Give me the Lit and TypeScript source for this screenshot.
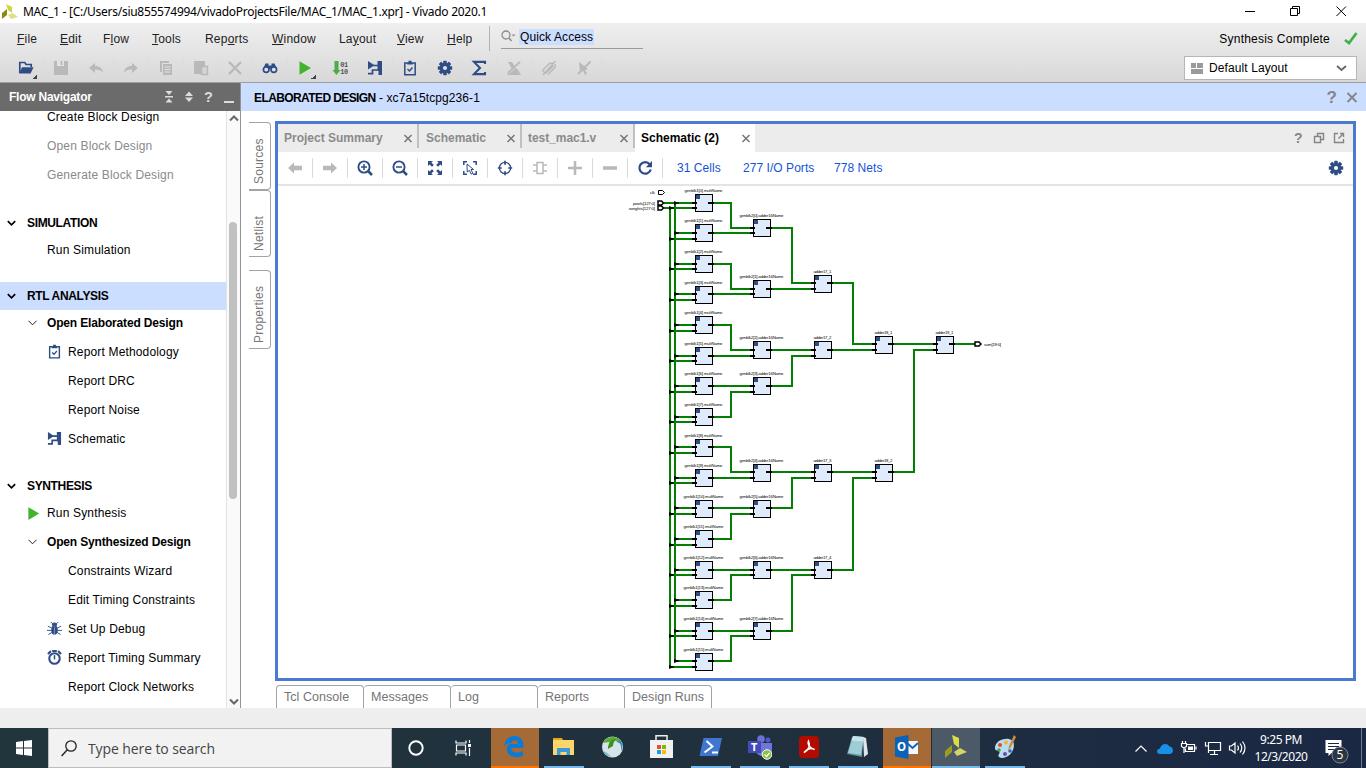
import { LitElement, html, svg, css, nothing } from "lit";
import { customElement } from "lit/decorators.js";
import { classMap } from "lit/directives/class-map.js";

const NAVY = "#2f4d85";
const GREY = "#b9b9b9";

const gear = (fill: string, hole: string) => svg`
  <g transform="translate(8 8)" fill=${fill}>
    ${[0, 45, 90, 135].map((a) => svg`<rect x="-1.8" y="-7.2" width="3.6" height="14.4" rx=".6" transform="rotate(${a})"/>`)}
    <circle r="5.2"/><circle r="2.1" fill=${hole}/>
  </g>`;

const ICONS: Record<string, unknown> = {
  open: svg`<path d="M1.8 13V2.5h5l1.2 2h5.2V7" fill="none" stroke=${NAVY} stroke-width="1.7"/><path d="M1.2 13.6 4 7.2h11.6l-3 6.4z" fill=${NAVY}/>`,
  save: svg`<path d="M1 1h14v14H1z" fill=${GREY}/><path d="M4 1h7v5H4z" fill="#e3e3e3"/><path d="M7.500 1h2v4h-2z" fill=${GREY}/>`,
  undo: svg`<path d="M1 8l6-5v3c4.500 0 7.500 2 8 7-2-3-4.500-3.500-8-3.400V13z" fill=${GREY}/>`,
  redo: svg`<path d="M15 8L9 3v3c-4.500 0-7.500 2-8 7 2-3 4.500-3.500 8-3.400V13z" fill=${GREY}/>`,
  copy: svg`<path d="M2 1h9v2H4v9H2z" fill=${GREY}/><path d="M5 4h9v11H5z" fill=${GREY}/><path d="M6.500 7h6M6.500 9.500h6M6.500 12h6" stroke="#e1e1e1"/>`,
  paste: svg`<path d="M1 1h11v5H8v8H1z" fill=${GREY}/><path d="M8.500 6.500h6v8h-6z" fill="#d4d4d4" stroke=${GREY} stroke-width="1.400"/>`,
  cut: svg`<path d="M2 2l12 12M14 2L2 14" stroke=${GREY} stroke-width="2.400"/>`,
  find: svg`<path d="M3.500 3.500h3v2h3v-2h3L15 9H1z" fill=${NAVY}/><circle cx="4.200" cy="9.600" r="2.800" fill="#dfe3ec" stroke=${NAVY} stroke-width="1.700"/><circle cx="11.800" cy="9.600" r="2.800" fill="#dfe3ec" stroke=${NAVY} stroke-width="1.700"/>`,
  play: svg`<path d="M2.500 1.200L14 8 2.500 14.800z" fill="#3fb42c"/>`,
  bits: svg`<path d="M2.500 1h4v9H8.500l-4 5-4-5h2z" fill="#48ae49"/><text x="8.200" y="7" class="bit">01</text><text x="8.200" y="14" class="bit">10</text>`,
  schem: svg`<path d="M1 1l6.500 4.200L1 9.500z" fill=${NAVY}/><path d="M10.500 1H15v14h-3.500v-4h-1z" fill=${NAVY}/><path d="M6 5.500h5M1 13.700h4.500V10H11" fill="none" stroke=${NAVY} stroke-width="1.700"/>`,
  clip: svg`<path d="M2.800 3h10.400v11.800H2.800z" fill="none" stroke=${NAVY} stroke-width="1.500"/><path d="M5.200 4.500V2.700h1.300V.8h3v1.900h1.300v1.800z" fill=${NAVY}/><path d="M5.500 9l2 2 3-3.500" fill="none" stroke=${NAVY} stroke-width="1.400"/>`,
  gear: gear(NAVY, "#e0e0e0"),
  gearw: gear(NAVY, "#fff"),
  sum: svg`<path d="M14 4V1.900H3L9 8l-6 6.100h11V12" fill="none" stroke=${NAVY} stroke-width="2.100"/>`,
  off1: svg`<path d="M2 2h4l3 5 3 3 3 5H1l5-6z" fill=${GREY}/><path d="M14 2L2 13" stroke=${GREY} stroke-width="2"/><path d="M13.500 4L4 13" stroke="#dedede" stroke-width=".8"/>`,
  off2: svg`<path d="M1.500 10.500l7-7 3.500-.5M4.500 13.500l8-7.500M1.500 10.500l3 3M7 14.500l7-7V4M14.500 1L2 15M6 11.500l6-6" fill="none" stroke=${GREY} stroke-width="1.400"/>`,
  off3: svg`<path d="M3 2l9 7-3 1 2 4-2 .8-2-4-3 2z" fill=${GREY}/><path d="M14.500 1.500L2 14" stroke=${GREY} stroke-width="2"/>`,
  left: svg`<path d="M1 8l6-5.500v3.200h8v4.600H7v3.200z" fill=${GREY}/>`,
  right: svg`<path d="M15 8L9 2.500v3.200H1v4.600h8v3.200z" fill=${GREY}/>`,
  zin: svg`<circle cx="7" cy="7" r="5.600" fill="none" stroke=${NAVY} stroke-width="1.900"/><path d="M11 11l4 4" stroke=${NAVY} stroke-width="2.500"/><path d="M4 7h6M7 4v6" stroke=${NAVY} stroke-width="1.500"/>`,
  zout: svg`<circle cx="7" cy="7" r="5.600" fill="none" stroke=${NAVY} stroke-width="1.900"/><path d="M11 11l4 4" stroke=${NAVY} stroke-width="2.500"/><path d="M4 7h6" stroke=${NAVY} stroke-width="1.500"/>`,
  fit: svg`<g fill=${NAVY}><path d="M1 1h5L4.400 2.600 6.800 5 5 6.800 2.600 4.400 1 6z"/><path d="M15 1v5l-1.600-1.600L11 6.800 9.200 5l2.400-2.400L10 1z"/><path d="M15 15h-5l1.600-1.600L9.200 11 11 9.200l2.400 2.400L15 10z"/><path d="M1 15v-5l1.600 1.600L5 9.200 6.800 11l-2.400 2.400L6 15z"/></g>`,
  sel: svg`<path d="M1.800 5V1.800H5M11 1.800h3.200V5M14.200 11v3.200H11M5 14.200H1.800V11" fill="none" stroke=${NAVY} stroke-width="1.500"/><path d="M5 4l6.500 5.500H9l1.800 3.800-1.700.8-1.700-3.800L5.200 12z" fill="#fff" stroke=${NAVY}/>`,
  target: svg`<circle cx="8" cy="8" r="5.600" fill="none" stroke=${NAVY} stroke-width="1.300"/><path d="M8 .8v4M8 11.200v4M.8 8h4M11.200 8h4" stroke=${NAVY} stroke-width="1.700"/>`,
  chip: svg`<path d="M5 2.500h6v11H5zM1 5h4M1 11h4M11 5h4M11 11h4" fill="none" stroke=${GREY} stroke-width="1.500"/>`,
  plus: svg`<path d="M8 1v14M1 8h14" stroke=${GREY} stroke-width="2.600"/>`,
  minus: svg`<path d="M1 8h14" stroke=${GREY} stroke-width="3.600"/>`,
  reload: svg`<path d="M12.700 4.200A5.800 5.800 0 1 0 13.800 9.500" fill="none" stroke=${NAVY} stroke-width="2.200"/><path d="M15 1v6.200H8.800z" fill=${NAVY}/>`,
  bug: svg`<ellipse cx="8" cy="9.500" rx="3.500" ry="5" fill=${NAVY}/><path d="M5.500 4.500a2.500 2.500 0 0 1 5 0zM4 1l3 3M12 1L9 4M1 5.500l4 2M15 5.500l-4 2M0 10h16M1.500 14.500l4-2.500M14.500 14.500l-4-2.500" fill=${NAVY} stroke=${NAVY}/><path d="M8 6v8" stroke="#8fa1c4" stroke-width=".8"/>`,
  timer: svg`<circle cx="8" cy="9" r="5.600" fill="#fff" stroke=${NAVY} stroke-width="2.200"/><path d="M5.500 1h5M1 4.200l3.200-3M15 4.200l-3.200-3" stroke=${NAVY} stroke-width="2.200"/><path d="M8 5.500V10" stroke=${NAVY} stroke-width="1.600"/>`,
};

const icon = (name: string, size = 16) =>
  html`<svg class="ic" width=${size} height=${size} viewBox="0 0 16 16">${ICONS[name]}</svg>`;

const base = css`
  :host { font-family: "Liberation Sans", Arial, sans-serif; font-size: 12px; letter-spacing: 0.2px; color: #000; box-sizing: border-box; }
  * { box-sizing: border-box; }
  svg { display: block; flex: none; }
  .bit { font: bold 7px "Liberation Mono", monospace; fill: #555; letter-spacing: -0.5px; }
`;

@customElement("title-bar")
class TitleBar extends LitElement {
  static styles = [base, css`
    :host { display: flex; height: 23px; background: #fff; align-items: center; }
    .logo { margin-left: 1px; }
    .title { margin-left: 5px; font: 12px "Noto Sans", sans-serif; letter-spacing: -0.275px; white-space: nowrap; flex: 1; }
    .controls { margin-right: 7px; }
  `];
  render() {
    return html`
      <svg class="logo" width="17" height="17" viewBox="0 0 17 17"><path d="M5 1l6 3v6L7 7z" fill="#d5d23c"/><path d="M6 6v6l-5 4V10z" fill="#8a8b12"/><path d="M7 12l5-2 5 4-7 2z" fill="#dfe08a"/></svg>
      <span class="title">MAC_1 - [C:/Users/siu855574994/vivadoProjectsFile/MAC_1/MAC_1.xpr] - Vivado 2020.1</span>
      <svg class="controls" width="116" height="20" viewBox="1243 0 116 20" fill="none" stroke="#000">
        <path d="M1245 9.500h10M1290.500 6.500h7v7h-7zM1292.500 6.500v-2h7v7h-2M1336.500 4.500l9.500 9.500M1346 4.500l-9.500 9.500"/>
      </svg>`;
  }
}

@customElement("command-area")
class CommandArea extends LitElement {
  static styles = [base, css`
    :host { display: flex; flex-direction: column; height: 60px; background: linear-gradient(#efefef, #d8d8d8); border-bottom: 1px solid #9f9f9f; }
    .menus { display: flex; height: 31px; align-items: center; padding-left: 17px; color: #222; }
    .menu { flex: none; }
    .w0, .w1 { width: 43px; } .w2 { width: 49px; } .w3 { width: 53px; } .w4, .w5 { width: 67px; }
    .w6 { width: 58px; } .w7 { width: 50px; } .w8 { width: 42px; }
    .rule { width: 1px; height: 25px; background: #b4b4b4; }
    .quick { display: flex; align-items: center; width: 142px; height: 22px; margin: 0 0 2px 11px; padding-bottom: 1px; border-bottom: 1px solid #9b9b9b; }
    .quick span { margin-left: 3px; padding: 0 1px; line-height: 16px; background: #ccdeff; color: #000; letter-spacing: 0.1px; }
    .status { margin-left: auto; margin-right: 14px; color: #000; letter-spacing: 0.22px; }
    .tick { margin-right: 8px; }
    .tools { display: flex; height: 28px; align-items: center; padding-left: 9.500px; }
    .tool { width: 34.850px; height: 19px; display: flex; align-items: center; justify-content: center; border-right: 1px solid #dcdcdc; position: relative; }
    .corner { position: absolute; right: 6px; bottom: -1px; width: 5px; height: 5px; background: linear-gradient(135deg, transparent 50%, #444 50%); }
    .layout { display: flex; align-items: center; margin-left: auto; margin-right: 9px; width: 173px; height: 24px; border: 1px solid #b6b6b6; background: #fff; padding: 0 9px 0 6px; gap: 6px; }
    .layout span { flex: 1; letter-spacing: 0.1px; }
  `];
  render() {
    const menus = [["", "F", "ile"], ["", "E", "dit"], ["F", "l", "ow"], ["", "T", "ools"], ["Rep", "o", "rts"], ["", "W", "indow"], ["La", "y", "out"], ["", "V", "iew"], ["", "H", "elp"]];
    const tools = ["open", "save", "undo", "redo", "copy", "paste", "cut", "find", "play", "bits", "schem", "clip", "gear", "sum", "off1", "off2", "off3"];
    return html`
      <div class="menus">
        ${menus.map(([a, b, c], i) => html`<span class="menu w${i}">${a}<u>${b}</u>${c}</span>`)}
        <div class="rule"></div>
        <div class="quick">
          <svg width="15" height="13" viewBox="0 0 15 13"><circle cx="5" cy="5" r="4" fill="none" stroke="#8c8c8c" stroke-width="1.300"/><path d="M8 8l2.500 3" stroke="#8c8c8c" stroke-width="1.600"/><path d="M10.500 4.500h4l-2 2z" fill="#8c8c8c"/></svg>
          <span>Quick Access</span>
        </div>
        <span class="status">Synthesis Complete</span>
        <svg class="tick" width="14" height="13" viewBox="0 0 14 13"><path d="M1 8l4 3L12.500 1" fill="none" stroke="#41b049" stroke-width="2.700"/></svg>
      </div>
      <div class="tools">
        ${tools.map((t) => html`<div class="tool">${icon(t)}${t === "open" || t === "play" ? html`<i class="corner"></i>` : nothing}</div>`)}
        <div class="layout">
          <svg width="12" height="11" viewBox="0 0 12 11" fill="#9a9a9a"><path d="M0 0h5v5H0zM6 0h6v5H6zM0 6h12v5H0z"/></svg>
          <span>Default Layout</span>
          <svg width="11" height="7" viewBox="0 0 11 7"><path d="M1 1l4.500 4L10 1" fill="none" stroke="#666" stroke-width="1.800"/></svg>
        </div>
      </div>`;
  }
}

type Row = { t: string; lvl?: number; bold?: boolean; dim?: boolean; ic?: string };
type Section = { title?: string; on?: boolean; rows: Row[] };

const SECTIONS: Section[] = [
  { rows: [{ t: "Create Block Design" }, { t: "Open Block Design", dim: true }, { t: "Generate Block Design", dim: true }] },
  { title: "SIMULATION", rows: [{ t: "Run Simulation" }] },
  { title: "RTL ANALYSIS", on: true, rows: [
    { t: "Open Elaborated Design", bold: true },
    { t: "Report Methodology", lvl: 2, ic: "clip" }, { t: "Report DRC", lvl: 2 }, { t: "Report Noise", lvl: 2 }, { t: "Schematic", lvl: 2, ic: "schem" }] },
  { title: "SYNTHESIS", rows: [
    { t: "Run Synthesis", ic: "play" }, { t: "Open Synthesized Design", bold: true },
    { t: "Constraints Wizard", lvl: 2 }, { t: "Edit Timing Constraints", lvl: 2 }, { t: "Set Up Debug", lvl: 2, ic: "bug" },
    { t: "Report Timing Summary", lvl: 2, ic: "timer" }, { t: "Report Clock Networks", lvl: 2 }] },
];

@customElement("flow-navigator")
class FlowNavigator extends LitElement {
  static styles = [base, css`
    :host { display: flex; flex-direction: column; width: 241px; height: 625px; border-right: 1px solid #949494; background: #fff; }
    .head { display: flex; align-items: center; height: 28px; background: #6b6b6b; color: #fff; font-weight: bold; padding-left: 9px; letter-spacing: -0.24px; }
    .head span { flex: 1; }
    .body { display: flex; height: 597px; overflow: hidden; }
    .tree { width: 226px; margin-top: -9px; }
    .section { margin-bottom: 19px; }
    .section:first-child { margin-bottom: 20px; }
    .title { display: flex; align-items: center; height: 28px; font-weight: bold; padding-left: 7px; gap: 11px; letter-spacing: -0.35px; }
    .on { background: #ccdeff; }
    .row { display: flex; align-items: center; height: 29px; padding-left: 26px; white-space: nowrap; letter-spacing: 0.16px; }
    .title + .row { height: 26px; margin-bottom: 1px; }
    .slot { width: 21px; display: flex; flex: none; }
    .lvl2 { padding-left: 47px; }
    .bold { font-weight: bold; letter-spacing: -0.16px; }
    .bold .slot { padding-left: 2px; }
    .dim { color: #8a8a8a; }
    .bar { width: 14px; border-left: 1px solid #e3e3e3; background: #fafafa; display: flex; flex-direction: column; align-items: center; justify-content: space-between; padding: 4px 0 3px; }
    .thumb { width: 8px; height: 277px; margin: 100px 1px auto 0; border-radius: 4px; background: #c1c1c1; flex: none; }
  `];
  render() {
    return html`
      <div class="head"><span>Flow Navigator</span>
        <svg width="76" height="16" viewBox="0 0 76 16"><g fill="#ddd"><path d="M1 7h8v1.500H1zM1.500 2h7L5 6zM1.500 13.500h7L5 9.500zM21 7l4-4.500L29 7zM21 8.500h8l-4 4.500z"/><path d="M60 12h10v2H60z"/></g><text x="40" y="13" fill="#ddd" font-size="14.500" font-weight="bold">?</text></svg>
      </div>
      <div class="body">
        <div class="tree">
          ${SECTIONS.map((s) => html`<div class="section">
            ${s.title ? html`<div class=${classMap({ title: true, on: !!s.on })}>
              <svg width="9" height="7" viewBox="0 0 9 7"><path d="M.8 1.200l3.700 3.600L8.200 1.200" fill="none" stroke="#000" stroke-width="1.700"/></svg>${s.title}</div>` : nothing}
            ${s.rows.map((r) => html`<div class=${classMap({ row: true, lvl2: r.lvl === 2, bold: !!r.bold, dim: !!r.dim })}>
              <div class="slot">${r.ic ? icon(r.ic, 15) : r.bold ? html`<svg width="9" height="6" viewBox="0 0 9 6"><path d="M.5.8l4 4 4-4" fill="none" stroke="#222"/></svg>` : nothing}</div>${r.t}</div>`)}
          </div>`)}
        </div>
        <div class="bar">
          <svg width="10" height="7" viewBox="0 0 10 7"><path d="M1 5.500l4-4 4 4" fill="none" stroke="#666" stroke-width="2"/></svg>
          <div class="thumb"></div>
          <svg width="10" height="7" viewBox="0 0 10 7"><path d="M1 1.500l4 4 4-4" fill="none" stroke="#666" stroke-width="2"/></svg>
        </div>
      </div>`;
  }
}

type Cell = { x: number; y: number; p: number; q: number; name: string; mid: number };
const cells = (x: number, rows: number[][], name: (i: number) => string): Cell[] =>
  rows.map(([y, p, q], i) => ({ x, y, p, q, name: name(i), mid: x + 9 }));

const MULTS = cells(695, [[194, 203, 208], [224, 233, 239], [255, 264, 269], [286, 294, 300], [316, 325, 331], [347, 356, 361], [377, 386, 392], [408, 417, 422], [439, 447, 453], [469, 478, 483], [500, 508, 514], [530, 539, 545], [561, 570, 575], [591, 600, 606], [622, 631, 636], [653, 661, 667]], (i) => `genblk1[${i}].multName`);
const ADD16 = cells(753, [[219, 228, 233], [280, 289, 294], [341, 350, 356], [377, 386, 392], [464, 472, 478], [500, 508, 514], [561, 570, 575], [622, 631, 636]], (i) => `genblk2[${i}].adder16Name`);
const ADD17 = cells(814, [[275, 283, 289], [341, 350, 356], [464, 472, 478], [561, 570, 575]], (i) => `adder17_${i + 1}`);
const ADD18 = cells(875, [[336, 344, 350], [464, 472, 478]], (i) => `adder18_${i + 1}`);
const ADD19 = cells(936, [[336, 344, 350]], () => "adder19_1");

@customElement("schematic-view")
class SchematicView extends LitElement {
  static styles = [base, css`
    :host { display: block; }
    .wire { fill: none; stroke: #038003; stroke-width: 2; }
    .box { fill: #dfeafa; stroke: #000; stroke-width: 1; }
    .pin { stroke: #000; stroke-width: 2; fill: none; }
    .label { font-size: 4.300px; fill: #000; letter-spacing: 0; }
  `];
  private link(from: Cell[], to: Cell[], bend: number) {
    return from.map((c, i) => {
      const t = to[i >> 1];
      const y = i % 2 ? t.q : t.p;
      return svg`<path class="wire" d="M${c.x + 18} ${c.p}H${bend}V${y}H${t.x}"/>`;
    });
  }
  private cell(c: Cell, w: number) {
    return svg`
      <rect class="box" x=${c.x + 0.5} y=${c.y + 0.5} width="17" height="17"/>
      <rect x=${c.x + 1} y=${c.y + 1} width="4" height="4" fill=${NAVY}/>
      <path class="pin" d="M${c.x - 3} ${c.p}h5M${c.x - 3} ${c.q}h5M${c.x + 13} ${c.p}h6"/>
      <text class="label" x=${c.mid - w / 2 - 0.5} y=${c.y - 2} textLength=${w}>${c.name}</text>`;
  }
  render() {
    return html`<svg width="1075" height="492" viewBox="278 186 1075 492">
      <path class="wire" d="M664 203h12M664 208h8M670 208V668M675 203V662"/>
      ${MULTS.map((m) => svg`<path class="wire" d="M675 ${m.p}h20M670 ${m.q}h25"/>`)}
      ${this.link(MULTS, ADD16, 731)}${this.link(ADD16, ADD17, 792)}${this.link(ADD17, ADD18, 853)}${this.link(ADD18, ADD19, 914)}
      <path class="wire" d="M954 344h21"/>
      ${MULTS.map((m) => svg`<path d="M674 ${m.p - 2}l2.500 1 2.500.500v1l-2.500.500-2.500 1zM669 ${m.q - 2}l2.500 1 2.500.500v1l-2.500.500-2.500 1z"/>`)}
      ${MULTS.map((c, i) => this.cell(c, i > 9 ? 40 : 38))}${ADD16.map((c) => this.cell(c, 44))}
      ${[...ADD17, ...ADD18, ...ADD19].map((c) => this.cell(c, 18))}
      <path d="M658.500 190.500h4l2 2-2 2h-4z" fill="#fff" stroke="#000"/>
      <path d="M658 201h3.500l2 2-2 2H658zM658 206h3.500l2 2-2 2H658zM975 342h4l2 2-2 2h-4z" fill="#fff" stroke="#000" stroke-width="1.500"/>
      <text class="label" x="650" y="194" textLength="5">clk</text>
      <text class="label" x="633" y="205.300" textLength="22">pixels[127:0]</text>
      <text class="label" x="629" y="210.300" textLength="26">weights[127:0]</text>
      <text class="label" x="984" y="346" textLength="17">sum[19:0]</text>
    </svg>`;
  }
}

@customElement("design-area")
class DesignArea extends LitElement {
  static styles = [base, css`
    :host { display: flex; flex-direction: column; width: 1125px; height: 625px; background: #fff; }
    .head { display: flex; align-items: center; height: 28px; background: #ccdeff; padding: 1px 7px 0 13px; }
    .head span { flex: 1; white-space: pre; letter-spacing: 0.09px; }
    .head b { letter-spacing: -0.6px; }
    .work { display: flex; }
    .side { width: 34px; padding: 11px 0 0 8px; }
    .vtab { display: flex; align-items: center; justify-content: center; width: 22px; height: 68px; border: 1px solid #a3a3a3; border-right: 0; border-radius: 4px 0 0 4px; color: #777; writing-mode: vertical-rl; transform: rotate(180deg); letter-spacing: 0.250px; padding-left: 2px; }
    .s { padding-bottom: 10px; }
    .n { height: 67px; padding-bottom: 19px; }
    .tall { height: 79px; margin-top: 13px; padding-bottom: 10px; }
    .frame { width: 1081px; height: 560px; margin-top: 10px; border: 3px solid #4a7bd0; }
    .tabs { display: flex; height: 28px; background: #ececec; align-items: center; color: #8a8a8a; font-weight: bold; letter-spacing: 0; }
    .tab { display: flex; align-items: center; justify-content: space-between; padding: 4px 4px 0 6px; height: 24px; border-right: 2px solid #c0c0c0; margin-bottom: 4px; }
    .t0 { width: 141px; } .t1 { width: 103px; padding-left: 7px; } .t2 { width: 113px; letter-spacing: -0.05px; }
    .active { width: 120px; height: 28px; margin: 0; padding: 0 4px 0 6px; background: #fff; color: #000; border-right: 0; letter-spacing: 0; }
    .wins { margin-left: auto; margin-right: 8px; }
    .tools { display: flex; align-items: center; height: 34px; border-bottom: 2px solid #e4e4e4; }
    .tool { width: 35px; height: 20px; display: flex; align-items: center; justify-content: center; border-right: 1px solid #dadada; }
    .link { color: #1553d6; width: 91px; letter-spacing: 0.050px; }
    .link:nth-of-type(1) { margin-left: 14px; width: 66px; }
    .cog { margin-left: auto; margin-right: 9px; }
    .bottom { display: flex; margin: 4px 0 0 35px; height: 23px; }
    .btab { width: 87px; padding-left: 7px; line-height: 23px; font-size: 12.500px; letter-spacing: 0.05px; color: #747474; border: 1px solid #a3a3a3; border-left: 0; border-bottom: 0; border-radius: 4px 4px 0 0; }
    .btab:first-child { width: 88px; border-left: 1px solid #a3a3a3; }
  `];
  render() {
    const x = html`<svg width="10" height="9" viewBox="0 0 10 9"><path d="M1.500 1l7 7M8.500 1l-7 7" stroke="#777" stroke-width="1.500"/></svg>`;
    const tools = ["left", "right", "zin", "zout", "fit", "sel", "target", "chip", "plus", "minus", "reload"];
    return html`
      <div class="head"><span><b>ELABORATED DESIGN</b> - xc7a15tcpg236-1</span>
        <svg width="34" height="16" viewBox="0 0 34 16"><text x="1.500" y="13" font-size="17" font-weight="bold" fill="#858585">?</text><path d="M22.500 3l9 9M31.500 3l-9 9" stroke="#858585" stroke-width="1.900"/></svg>
      </div>
      <div class="work">
        <div class="side"><div class="vtab s">Sources</div><div class="vtab n">Netlist</div><div class="vtab tall">Properties</div></div>
        <div class="frame">
          <div class="tabs">
            <div class="tab t0">Project Summary${x}</div><div class="tab t1">Schematic${x}</div><div class="tab t2">test_mac1.v${x}</div><div class="tab active">Schematic (2)${x}</div>
            <svg class="wins" width="51" height="14" viewBox="0 0 51 14"><text x="0" y="12" font-size="14" font-weight="bold" fill="#858585">?</text><path d="M20.500 5.500h6v6h-6zM23.500 5.500v-3h6v6h-3M44 2.500h-3.500v9h9V8M44.500 7.500l4-4M46 2.500h3.500v3.500" fill="none" stroke="#858585" stroke-width="1.400"/></svg>
          </div>
          <div class="tools">
            ${tools.map((t) => html`<div class="tool">${icon(t)}</div>`)}
            <span class="link">31 Cells</span><span class="link">277 I/O Ports</span><span class="link">778 Nets</span>
            <svg class="cog" width="16" height="16" viewBox="0 0 16 16">${ICONS.gearw}</svg>
          </div>
          <schematic-view></schematic-view>
        </div>
      </div>
      <div class="bottom">${["Tcl Console", "Messages", "Log", "Reports", "Design Runs"].map((t) => html`<div class="btab">${t}</div>`)}</div>`;
  }
}

const APPS: { bg?: string; line?: string; g: unknown }[] = [
  { bg: "orange", line: "l-orange", g: svg`<path d="M2 13C3 5 8 2 12.500 2 19 2 22 7 21.500 14H9c0 3 3 4.500 6 4.500 2.500 0 4.500-.6 6-1.500v4.500C19 23 16 23.500 13.500 23 7 22.500 4 18 5 14c.6-2.600 2-4 4-5-4 0-6 2-7 4zm7-3h7c0-2-1-3.500-3.500-3.500S9.500 8 9 10z" fill="#0a7bd8"/>` },
  { line: "l-blue", g: svg`<path d="M2 4h9l1 2H2z" fill="#e8a317"/><path d="M2 6h21v15H2z" fill="#fcd66a"/><path d="M6 21v-7h13v7h-3.500v-3h-6v3z" fill="#3d9ad6"/>` },
  { g: svg`<circle cx="12.500" cy="13" r="10.500" fill="#d4e4e8"/><path d="M3 9C6 2 16 1 20 6l-1 3c-2-3-5-3-6 1-2-2-6-2-10-1z" fill="#58ab34"/><path d="M8 15C8 9 11 5 16 5c-2 2-3 4-3 7z" fill="#3d8f22"/><path d="M3 17c3 1 6 3 8 6-4-1-7-3-8-6z" fill="#6fb7cf"/><path d="M16 8c4 0 6 3 5 9 2-3 2-7-1-11z" fill="#2c88b7"/>` },
  { g: svg`<path d="M7 6V1.700h11V6" fill="none" stroke="#eee" stroke-width="1.500"/><path d="M1 6h23v18H1z" fill="#f1f1f1"/><path d="M8 11h4v4H8z" fill="#e8502a"/><path d="M13 11h4v4h-4z" fill="#7eb900"/><path d="M8 16h4v4H8z" fill="#1ba1e2"/><path d="M13 16h4v4h-4z" fill="#fbb917"/>` },
  { line: "l-blue", g: svg`<path d="M5.500 4H24l-4 18H1.500z" fill="#3f76cf"/><path d="M8.500 7l6 5.500-8 6M14 18.500h6" fill="none" stroke="#fff" stroke-width="2"/>` },
  { line: "l-blue", g: svg`<circle cx="14" cy="5" r="3.800" fill="#6b71d8"/><circle cx="21" cy="6" r="2.500" fill="#5059c9"/><path d="M9 9h16v9c-1 4-7 5-11 4-3-1-5-3-5-5z" fill="#6f76da"/><path d="M1 7h13v12H1z" fill="#444bb5"/><text x="4" y="17" font-size="11" font-weight="bold" fill="#fff">T</text><circle cx="20" cy="20.500" r="4.800" fill="#8ac33f" stroke="#fff"/><path d="M17.500 20.500l2 2 3-3.500" fill="none" stroke="#fff" stroke-width="1.300"/>` },
  { line: "l-blue", g: svg`<rect x="3" y="2" width="20" height="22" rx="4" fill="#b30b00"/><path d="M8 18.500c5-3 6.500-7.500 4.500-11.500-1.500 4 2.500 8 6 8.500C15 13.500 11 15 8 18.500z" fill="none" stroke="#fff" stroke-width="1.500"/>` },
  { line: "l-blue", g: svg`<path d="M18 3l3 1 2 16-4 3z" fill="#dfe5e8"/><path d="M7 3l11 1-1 19-15-3z" fill="#62919d"/><path d="M8 2l11 1-3 18-13-2z" fill="#9fcdd5"/><path d="M8 2l11 1-.7 4.500L6.500 6.500z" fill="#c5e3e8"/>` },
  { bg: "orange", line: "l-orange", g: svg`<path d="M12 7h12v13H12z" fill="#f5f9ff"/><path d="M13 9l5.500 5L24 9" fill="none" stroke="#1268bd" stroke-width="2"/><path d="M1 3.500L14.500 1v24L1 22.500z" fill="#0a63b8"/><text x="3" y="17" font-size="11.500" font-weight="bold" fill="#fff">O</text>` },
  { bg: "live", line: "l-blue", g: svg`<path d="M9 1l7 3v10l-5-4z" fill="#dcdc4b"/><path d="M9 11v7l-7 6v-7z" fill="#9c9c1e"/><path d="M11 18l6-4 7 4-10 4z" fill="#d3d469"/>` },
  { line: "l-blue", g: svg`<path d="M3 14C3 8 10 4 17 5c6 1 6 8 3 13-4 6-10 7-13 5-2-2 2-4 0-6-2-1-4 0-4-3z" fill="#b8dcf0"/><circle cx="8" cy="11" r="2" fill="#e3482d"/><circle cx="14" cy="8.500" r="2" fill="#f1b52a"/><circle cx="7" cy="16" r="1.800" fill="#4aa642"/><circle cx="13" cy="20" r="2" fill="#7048a8"/><circle cx="18" cy="17" r="1.800" fill="#2a6fc4"/><path d="M22 1l2 2-5 10-3 5 1-6z" fill="#cf8a3f"/>` },
];

@customElement("task-bar")
class TaskBar extends LitElement {
  static styles = [base, css`
    :host { display: flex; height: 40px; background: linear-gradient(90deg, #20353c, #20303d 55%, #1a2844); font-family: "Noto Sans", sans-serif; letter-spacing: 0; color: #fff; }
    .start { width: 48px; display: flex; align-items: center; justify-content: center; }
    .search { width: 344px; background: #f2f2f2; border: 1px solid #bdbdbd; display: flex; align-items: center; padding-left: 12px; gap: 11px; color: #444; font-size: 14px; font-family: "Open Sans", sans-serif; letter-spacing: -0.1px; }
    .sys { width: 49px; display: flex; align-items: center; justify-content: center; }
    .start + .search + .sys { width: 48px; }
    .sys + .sys { width: 50px; padding-right: 3px; }
    .app { width: 49px; display: flex; flex-direction: column; align-items: center; }
    .tile { width: 48px; height: 38px; display: flex; align-items: center; justify-content: center; }
    .orange { background: #a66a36; } .live { background: #4c5a68; }
    .line { width: 40px; height: 2px; }
    .l-blue { background: #76b9ed; } .l-orange { background: #ff7500; width: 48px; }
    .live + .line { width: 48px; }
    .tray { margin-left: auto; }
    .clock { width: 62px; display: flex; flex-direction: column; align-items: center; justify-content: center; font-size: 12px; line-height: 17px; padding-bottom: 1px; letter-spacing: -0.450px; white-space: nowrap; }
    .note { margin-left: 10px; }
  `];
  render() {
    return html`
      <div class="start"><svg width="16" height="16" viewBox="0 0 16 16" fill="#fff"><path d="M0 2l7-1v6.500H0zM8 .9L16 0v7.500H8zM0 8.500h7V15l-7-1zM8 8.500h8V16l-8-1z"/></svg></div>
      <div class="search"><svg width="16" height="17" viewBox="0 0 16 17"><circle cx="10" cy="6" r="5.200" fill="none" stroke="#222" stroke-width="1.300"/><path d="M6.300 9.800L.6 16" stroke="#222" stroke-width="1.400"/></svg>Type here to search</div>
      <div class="sys"><svg width="16" height="16" viewBox="0 0 16 16"><circle cx="8" cy="8" r="6.700" fill="none" stroke="#fff" stroke-width="1.900"/></svg></div>
      <div class="sys"><svg width="17" height="16" viewBox="0 0 17 16" fill="none" stroke="#fff" stroke-width="1.200"><path d="M1 .5v2.500h10V.5M1.500 5h9v6h-9zM1 15.500V13h10v2.500M14.500 0v3M14.500 8v8"/><path d="M13 4h3v3h-3z" fill="#fff" stroke="none"/></svg></div>
      ${APPS.map((a) => html`<div class="app"><div class="tile ${a.bg ?? ""}"><svg width="25" height="26" viewBox="0 0 25 26">${a.g}</svg></div><div class="line ${a.line ?? ""}"></div></div>`)}
      <svg class="tray" width="116" height="40" viewBox="1134 728 116 40" fill="none" stroke="#fff" stroke-width="1.200">
        <path d="M1135.500 751.500l5.500-5.500 5.500 5.500"/>
        <path d="M1160 754c-4 0-4-5 0-5.500 1-5 7-6 9.500-2 4 0 5 7 .5 7.500z" fill="#1a8fe6" stroke="none"/>
        <path d="M1186.500 744.500h8v7h-9v-3M1196 746.500v3M1182.500 741v3M1185.500 741v3M1181.500 743.500h5v3l-2.500 1.500-2.500-1.500zM1184 748v5"/><path d="M1188 746.500h5v3.500h-5z" fill="#fff" stroke="none"/>
        <path d="M1208.500 742.500h12v8h-12zM1214.500 751v3M1210 754.500h8M1205.500 742v4h3v7"/>
        <path d="M1229.500 746v4h2l3.500 3v-10l-3.500 3zM1237.500 745.500q2 2.500 0 5M1240 743.500q3.500 4.500 0 9M1242.500 741.500q5 6.500 0 13"/>
      </svg>
      <div class="clock"><span>9:25 PM</span><span>12/3/2020</span></div>
      <svg class="note" width="44" height="40" viewBox="1322 728 44 40"><path d="M1325.500 740h16v13h-10l-3 3v-3h-3z" fill="#fff"/><path d="M1328 743.500h11M1328 746.500h11M1328 749.500h7" stroke="#1a2844"/><circle cx="1340" cy="755" r="8" fill="#2d3540" stroke="#7e8790"/><text x="1336.600" y="759.300" font-size="12" fill="#fff">5</text><path d="M1361.500 728v40" stroke="#6f7888"/></svg>`;
  }
}

@customElement("app-root")
class AppRoot extends LitElement {
  static styles = css`
    :host { display: flex; flex-direction: column; width: 1366px; height: 768px; overflow: hidden; background: #eee; }
    .middle { display: flex; height: 625px; }
    .gap { height: 20px; background: #eee; }
  `;
  render() {
    return html`<title-bar></title-bar><command-area></command-area>
      <div class="middle"><flow-navigator></flow-navigator><design-area></design-area></div>
      <div class="gap"></div><task-bar></task-bar>`;
  }
}
